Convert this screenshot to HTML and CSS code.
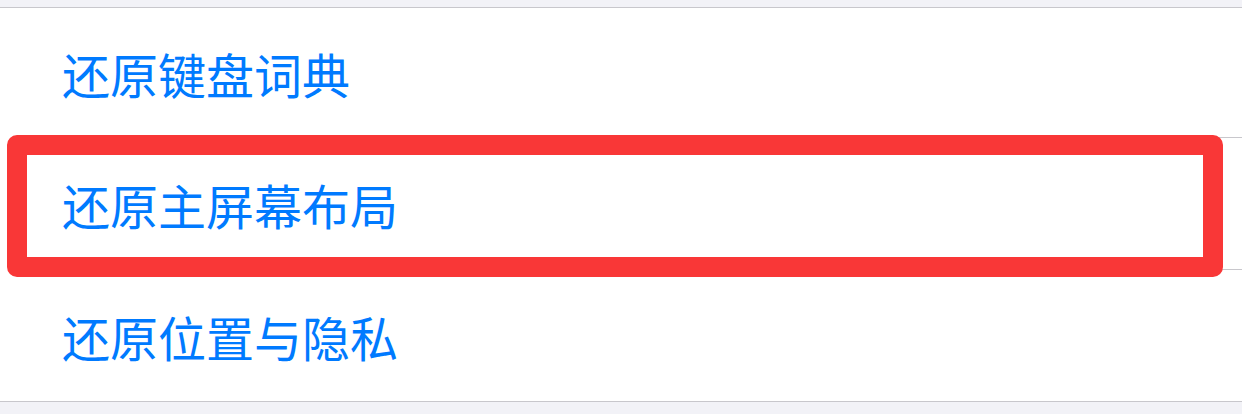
FILE: index.html
```html
<!DOCTYPE html>
<html lang="zh-CN">
<head>
    <meta charset="UTF-8">
    <meta name="viewport" content="width=device-width, initial-scale=1.0">
    <title>还原</title>
    <link rel="stylesheet" href="styles.css">
</head>
<body>
    <div class="page">
        <div class="gap-top"></div>
        <div class="list">
            <div class="row row-first">还原键盘词典</div>
            <div class="row">还原主屏幕布局</div>
            <div class="row row-last">还原位置与隐私</div>
        </div>
        <div class="highlight"></div>
    </div>
</body>
</html>
```

FILE: styles.css
```css
/* 页面背景 */
body {
    margin: 0;
    background: #f2f2f7;
    font-family: "Noto Sans CJK SC", "Noto Sans", sans-serif;
}

.page {
    position: relative;
    height: 414px;
    overflow: hidden;
}

.gap-top {
    height: 7px;
    border-bottom: 1px solid #c8c7cc;
}

/* 列表 */
.list {
    background: #ffffff;
    border-bottom: 1px solid #c8c7cc;
}

/* 每一行（分隔线从文字处开始） */
.row {
    display: flex;
    align-items: center;
    margin-left: 62px;
    height: 132px;
    font-size: 48px;
    color: #007aff;
    border-bottom: 1px solid #c8c7cc;
    box-sizing: border-box;
}

.row-first {
    height: 130px;
}

.row-last {
    border-bottom: none;
    height: 131px;
}

/* 红色标记框 */
.highlight {
    position: absolute;
    left: 7px;
    top: 135px;
    width: 1216px;
    height: 142px;
    box-sizing: border-box;
    border: 20px solid #f93737;
    border-radius: 10px;
}
```
